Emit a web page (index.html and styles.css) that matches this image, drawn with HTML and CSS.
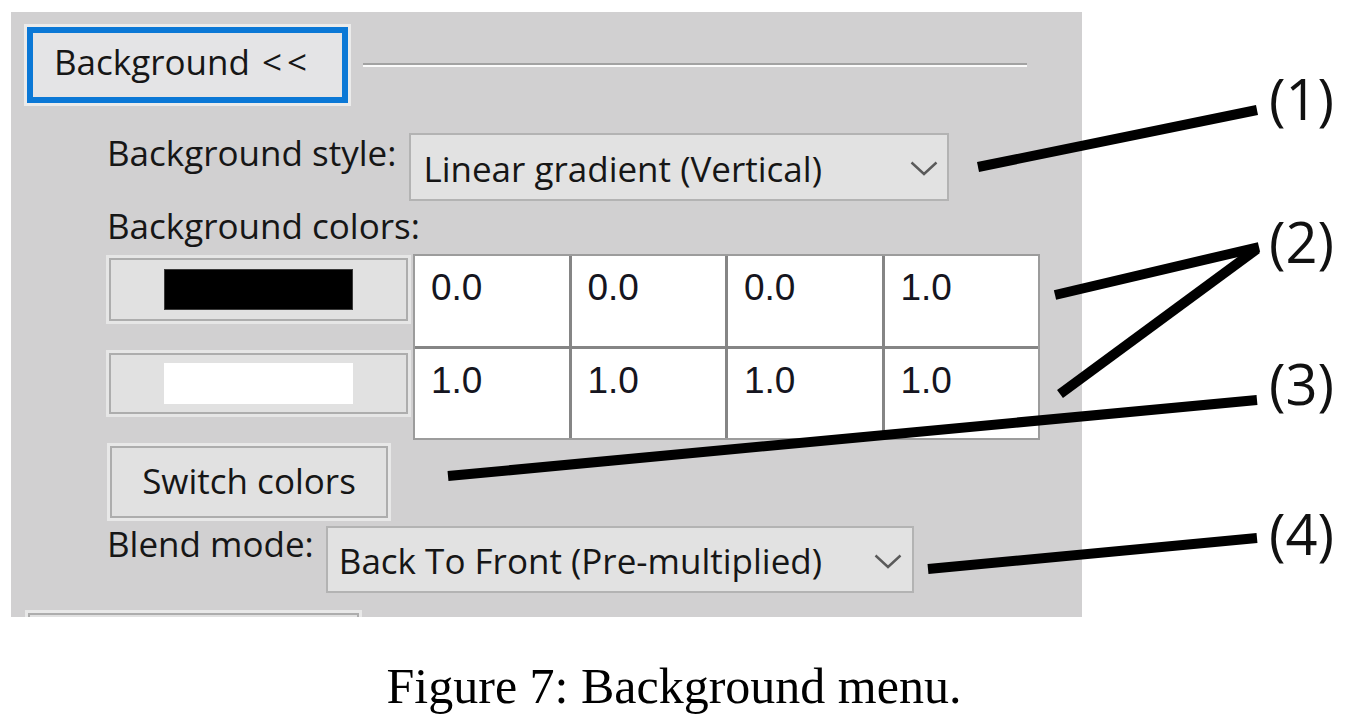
FILE: index.html
```html
<!DOCTYPE html>
<html lang="en">
<head>
<meta charset="utf-8">
<title>Figure 7: Background menu</title>
<link rel="stylesheet" href="styles.css">
</head>
<body>
<div class="page">
  <div class="panel">
    <div class="header">
      <button class="btn focus">Background <span class="arrows">&lt;&lt;</span></button>
      <div class="sep"></div>
    </div>
    <div class="section">
      <div class="row row-style">
        <span class="label">Background style:</span>
        <div class="combo combo-style">
          <span>Linear gradient (Vertical)</span>
          <svg class="chev" width="28" height="15" viewBox="0 0 28 15"><path d="M1.5 1.5 L14 13 L26.5 1.5" fill="none" stroke="#5a5a5a" stroke-width="2.4"/></svg>
        </div>
      </div>
      <div class="label colors-label">Background colors:</div>
      <div class="colors">
        <div class="swatches">
          <button class="btn swatch-btn"><span class="swatch black"></span></button>
          <button class="btn swatch-btn second"><span class="swatch white"></span></button>
        </div>
        <div class="table">
          <div class="cell">0.0</div>
          <div class="cell">0.0</div>
          <div class="cell">0.0</div>
          <div class="cell">1.0</div>
          <div class="cell">1.0</div>
          <div class="cell">1.0</div>
          <div class="cell">1.0</div>
          <div class="cell">1.0</div>
        </div>
      </div>
      <button class="btn switch">Switch colors</button>
      <div class="row row-blend">
        <span class="label">Blend mode:</span>
        <div class="combo combo-blend">
          <span>Back To Front (Pre-multiplied)</span>
          <svg class="chev" width="28" height="15" viewBox="0 0 28 15"><path d="M1.5 1.5 L14 13 L26.5 1.5" fill="none" stroke="#5a5a5a" stroke-width="2.4"/></svg>
        </div>
      </div>
    </div>
    <button class="btn next"></button>
  </div>
  <p class="caption">Figure 7: Background menu.</p>

  <svg class="callouts" width="1348" height="722" viewBox="0 0 1348 722">
    <g stroke="#000" stroke-width="10" fill="none" stroke-linecap="butt">
      <line x1="978" y1="167" x2="1257" y2="110"/>
      <line x1="1055" y1="295" x2="1259" y2="247"/>
      <line x1="1060" y1="394" x2="1257" y2="249"/>
      <line x1="448" y1="476" x2="1257" y2="400"/>
      <line x1="928" y1="569" x2="1257" y2="538"/>
    </g>
  </svg>
  <span class="callout c1">(1)</span>
  <span class="callout c2">(2)</span>
  <span class="callout c3">(3)</span>
  <span class="callout c4">(4)</span>
</div>
</body>
</html>
```
FILE: styles.css
```css
* {
  box-sizing: border-box;
}

body {
  margin: 0;
  background: #ffffff;
}

.page {
  position: relative;
  width: 1348px;
  height: 722px;
  overflow: hidden;
}

.panel {
  margin: 12px 0 0 11px;
  width: 1071px;
  height: 605px;
  background: #d1d0d1;
  overflow: hidden;
  font-family: "Open Sans", "Noto Sans", sans-serif;
  font-size: 35px;
  color: #161616;
}

.btn {
  font-family: inherit;
  font-size: 35px;
  color: inherit;
  background: #e1e1e1;
  border: 2px solid #adadad;
  box-shadow: 0 0 0 3px #e8e8e8;
  margin: 0;
  padding: 0;
  line-height: 48px;
  display: flex;
  align-items: center;
  justify-content: center;
  white-space: pre;
}

.header {
  display: flex;
  align-items: center;
  gap: 15px;
  padding: 15px 0 0 16px;
}

.btn.focus {
  width: 321px;
  height: 76px;
  border: 6px solid #0b78d6;
  box-shadow: 0 0 0 3px #ebebeb;
  justify-content: flex-start;
  padding: 0 0 7px 21px;
  background: #e4e4e6;
}

.arrows {
  margin-left: 3px;
  letter-spacing: 5px;
}

.sep {
  width: 664px;
  height: 4px;
  background: #a2a2a2;
  border-bottom: 2px solid #fbfbfb;
}

.section {
  padding-left: 96px;
}

.row {
  display: flex;
  align-items: flex-start;
  gap: 13px;
}

.label {
  line-height: 48px;
  white-space: nowrap;
}

.row-style {
  margin-top: 30px;
}

.row-style .label {
  margin-top: -4px;
}

.combo {
  display: flex;
  align-items: center;
  justify-content: space-between;
  border: 2px solid #b3b3b3;
  background: #e2e2e2;
  padding: 3px 9px 0 12px;
  line-height: 48px;
  white-space: nowrap;
}

.combo .chev {
  flex: none;
}

.combo-style {
  width: 540px;
  height: 68px;
}

.combo-blend {
  width: 588px;
  height: 67px;
  padding-left: 11px;
  padding-right: 10px;
}

.colors-label {
  margin-top: 1px;
}

.colors {
  display: flex;
  margin-top: 4px;
}

.swatches {
  display: flex;
  flex-direction: column;
  gap: 32px;
  padding-top: 4px;
  margin-left: 2px;
}

.swatch-btn {
  width: 299px;
  height: 63px;
  box-shadow: 0 0 0 3px #e6e6e6;
}

.swatch-btn.second {
  height: 61px;
}

.swatch {
  display: block;
  width: 189px;
  height: 41px;
}

.swatch.black {
  background: #000;
  border: 1px solid #3a3a3a;
}

.swatch.white {
  background: #fff;
}

.table {
  margin-left: 5px;
  width: 627px;
  height: 186px;
  border: 2px solid #9c9c9c;
  background: #858585;
  display: grid;
  grid-template-columns: repeat(4, 1fr);
  grid-template-rows: repeat(2, 1fr);
  gap: 3px;
}

.cell {
  background: #ffffff;
  font-family: "Liberation Sans", Arial, sans-serif;
  font-size: 37px;
  line-height: 37px;
  padding: 13px 0 0 16px;
  color: #151520;
}

.btn.switch {
  margin: 6px 0 0 3px;
  width: 278px;
  height: 72px;
  padding-bottom: 3px;
}

.row-blend {
  margin-top: 8px;
  gap: 12px;
}

.row-blend .label {
  margin-top: -6px;
}

.btn.next {
  margin: 20px 0 0 17px;
  width: 331px;
  height: 76px;
}

.caption {
  margin: 0;
  padding-top: 44px;
  text-align: center;
  font-family: "Liberation Serif", "Times New Roman", serif;
  font-size: 50px;
  line-height: 50px;
  color: #000;
}

.callouts {
  position: absolute;
  left: 0;
  top: 0;
  pointer-events: none;
}

.callout {
  position: absolute;
  left: 1269px;
  font-family: "Open Sans", "Noto Sans", sans-serif;
  font-size: 56px;
  line-height: 56px;
  color: #111;
}

.c1 { top: 70px; }
.c2 { top: 213px; }
.c3 { top: 355px; }
.c4 { top: 505px; }
```
